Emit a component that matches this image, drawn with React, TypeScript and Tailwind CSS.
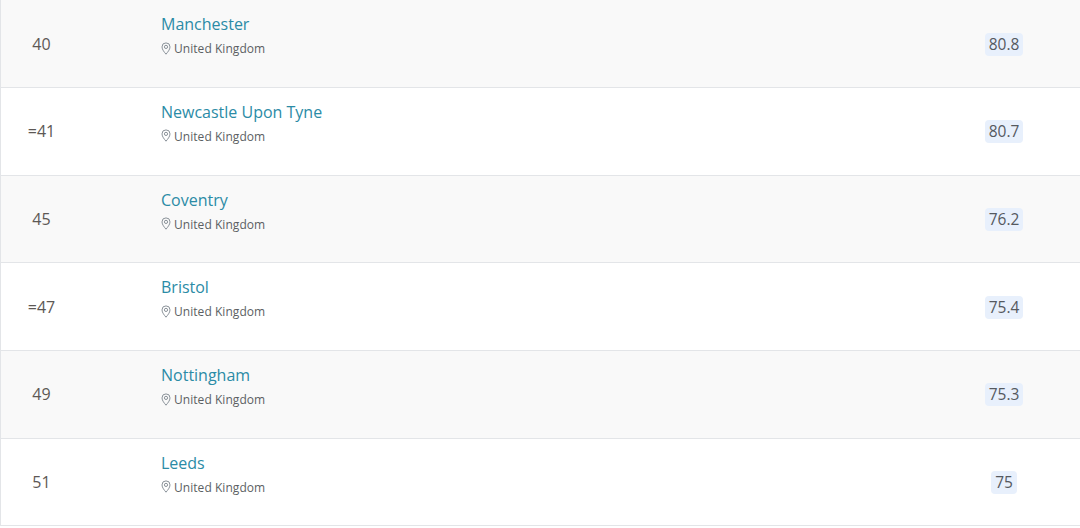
import React from "react";

const rows = [
  { rank: "40", name: "Manchester", score: "80.8" },
  { rank: "=41", name: "Newcastle Upon Tyne", score: "80.7" },
  { rank: "45", name: "Coventry", score: "76.2" },
  { rank: "=47", name: "Bristol", score: "75.4" },
  { rank: "49", name: "Nottingham", score: "75.3" },
  { rank: "51", name: "Leeds", score: "75" },
];

function Pin() {
  return (
    <svg width="10" height="13" viewBox="0 0 10 13" fill="none" stroke="#8a9299" strokeWidth="1" className="mb-[2px] shrink-0">
      <path d="M5 12.2C3.4 10.2 1 7.6 1 4.9a4 4 0 0 1 8 0c0 2.7-2.4 5.3-4 7.3Z" />
      <circle cx="5" cy="4.9" r="1.6" />
    </svg>
  );
}

export default function App() {
  return (
    <div className="h-[528px] w-[1080px] overflow-hidden bg-white pt-[0.25px] font-['Open_Sans',sans-serif]">
      {rows.map((r, i) => (
        <div
          key={r.name}
          className={`flex h-[87.7px] items-stretch border-b border-l border-[#e3e5e8] ${i % 2 === 0 ? "bg-[#f9f9f9]" : "bg-white"}`}
        >
          <div className="flex w-[160px] items-center pl-[26.5px]">
            <span className="w-[28px] text-center text-[16px] leading-5 text-[#5d5855]">{r.rank}</span>
          </div>
          <div className="flex flex-1 flex-col pt-[14px]">
            <span className="text-[16px] leading-5 text-[#2b8ba6]">{r.name}</span>
            <span className="mt-[6px] flex items-center gap-[3px] text-[12px] leading-[18px] tracking-[0.05px] text-[#5c5f63]">
              <Pin />
              United Kingdom
            </span>
          </div>
          <div className="flex w-[152px] items-center justify-center pt-[1px]">
            <span className="rounded-[4px] bg-[#e8f0fc] px-[4px] text-[15.5px] leading-[23px] text-[#55595f]">{r.score}</span>
          </div>
        </div>
      ))}
    </div>
  );
}
